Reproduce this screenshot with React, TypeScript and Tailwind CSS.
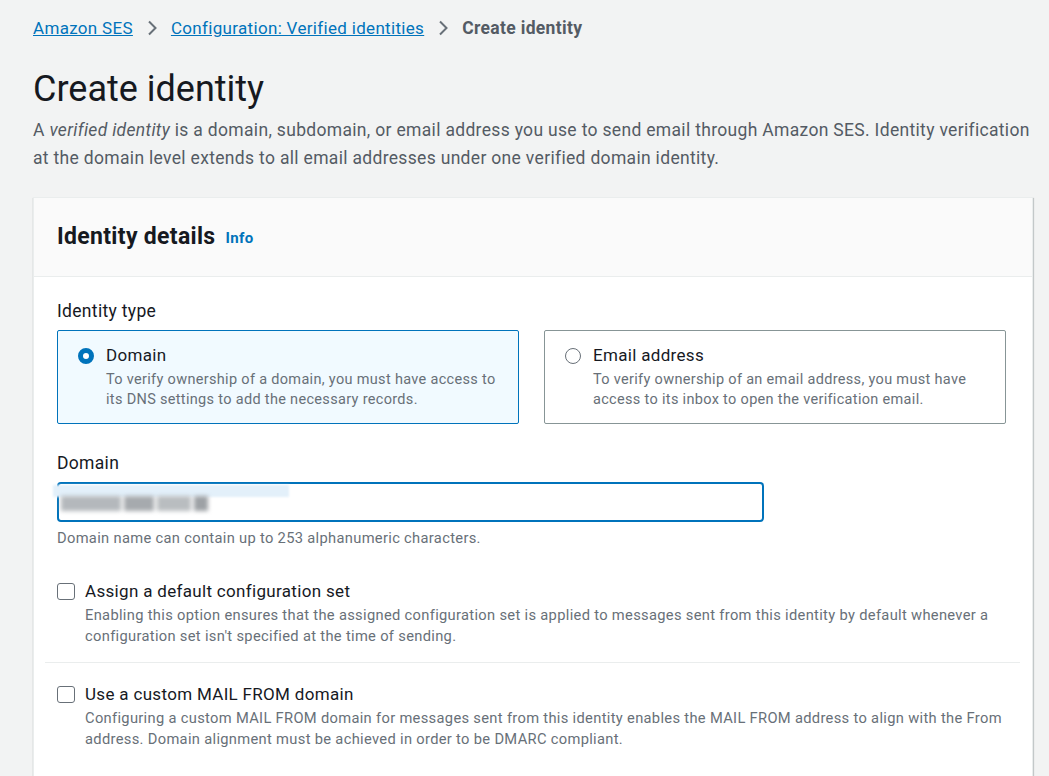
import { useState } from "react";

const font = { fontFamily: "Roboto, 'Liberation Sans', sans-serif" };

const Chevron = () => (
  <svg width="16" height="18" viewBox="0 0 16 18" className="mx-[11px] shrink-0">
    <path d="M5 2.5 11.5 9 5 15.5" fill="none" stroke="#687078" strokeWidth="2" />
  </svg>
);

interface TileProps {
  title: string;
  description: string;
  selected: boolean;
  onSelect: () => void;
}

const RadioTile = ({ title, description, selected, onSelect }: TileProps) => (
  <button
    type="button"
    onClick={onSelect}
    className={
      selected
        ? "flex h-[94px] items-start gap-[13px] rounded-[2px] border border-[#0073bb] bg-[#f1faff] pl-[20px] pr-4 pt-[12px] text-left"
        : "flex h-[94px] items-start gap-[13px] rounded-[2px] border border-[#879596] bg-white pl-[20px] pr-4 pt-[12px] text-left"
    }
  >
    <span
      className={
        selected
          ? "mt-[5px] h-[16px] w-[16px] shrink-0 rounded-full border-[5px] border-[#0073bb] bg-white"
          : "mt-[5px] h-[16px] w-[16px] shrink-0 rounded-full border border-[#687078] bg-white"
      }
    />
    <span className="-ml-px flex flex-col">
      <span className="text-[17px] leading-[24px] text-[#16191f]">{title}</span>
      <span className="mt-[3px] text-[14.5px] leading-[20px] text-[#687078]">{description}</span>
    </span>
  </button>
);

interface CheckProps {
  label: string;
  description: string;
}

const CheckOption = ({ label, description }: CheckProps) => {
  const [checked, setChecked] = useState(false);
  return (
    <label className="flex cursor-pointer items-start gap-[10px]">
      <input
        type="checkbox"
        checked={checked}
        onChange={() => setChecked(!checked)}
        className="mt-[3px] h-[17px] w-[18px] shrink-0 appearance-none rounded-[3px] border border-[#687078] bg-white checked:bg-[#0073bb]"
      />
      <span className="flex flex-col">
        <span className="text-[17px] leading-[22px] text-[#16191f]">{label}</span>
        <span className="mt-[3px] text-[14.7px] leading-[20.5px] text-[#687078]">{description}</span>
      </span>
    </label>
  );
};

export default function App() {
  const [identityType, setIdentityType] = useState<"domain" | "email">("domain");

  return (
    <div className="min-h-screen bg-[#f2f3f3] pb-10 pl-[33px] pt-[16px] tracking-[0.02em]" style={font}>
      <nav className="flex items-center text-[17px] leading-[24px]">
        <a href="#" className="text-[#0073bb] underline">Amazon SES</a>
        <Chevron />
        <a href="#" className="text-[#0073bb] underline">Configuration: Verified identities</a>
        <Chevron />
        <span className="text-[17.5px] font-bold text-[#545b64]">Create identity</span>
      </nav>

      <h1 className="mt-[27px] text-[36px] leading-[44px] tracking-normal text-[#16191f]">Create identity</h1>
      <p className="mt-[5px] w-[1000px] text-[17.5px] leading-[28px] text-[#545b64]">
        A <i>verified identity</i> is a domain, subdomain, or email address you use to send email through Amazon SES. Identity verification at the domain level extends to all email addresses under one verified domain identity.
      </p>

      <section className="mt-[25px] w-[1000px] border border-[#eaeded] bg-white shadow-[0_1px_1px_0_rgba(0,28,36,0.3),1px_1px_1px_0_rgba(0,28,36,0.15)]">
        <header className="flex h-[79px] items-center gap-[10px] border-b border-[#eaeded] bg-[#fafafa] px-[23px] pb-[1px]">
          <h2 className="text-[23px] font-bold leading-[30px] text-[#16191f]">Identity details</h2>
          <a href="#" className="mt-[3px] text-[15px] font-bold text-[#0073bb]">Info</a>
        </header>

        <div className="pb-[28px] pl-[23px] pr-[24px] pt-[23px]">
          <div className="text-[17.5px] leading-[22px] text-[#16191f]">Identity type</div>
          <div className="mt-[8px] grid grid-cols-2 gap-[25px] pr-[2px]">
            <RadioTile
              title="Domain"
              description="To verify ownership of a domain, you must have access to its DNS settings to add the necessary records."
              selected={identityType === "domain"}
              onSelect={() => setIdentityType("domain")}
            />
            <RadioTile
              title="Email address"
              description="To verify ownership of an email address, you must have access to its inbox to open the verification email."
              selected={identityType === "email"}
              onSelect={() => setIdentityType("email")}
            />
          </div>

          <div className="mt-[28px] text-[17.5px] leading-[22px] text-[#16191f]">Domain</div>
          <div className="relative mt-[8px] flex h-[40px] w-[707px] items-center rounded-[4px] border-2 border-[#0073bb] bg-white">
            <div className="absolute -left-[6px] top-[1px] h-[12px] w-[236px] bg-[#e3f0fa] blur-[1px]" />
            <div className="relative ml-[2px] mt-[3px] flex gap-[3px] blur-[2px]">
              <span className="h-[15px] w-[60px] bg-[#b4b8bc]" />
              <span className="h-[15px] w-[30px] bg-[#a6aaae]" />
              <span className="h-[15px] w-[34px] bg-[#b9bdc0]" />
              <span className="h-[15px] w-[14px] bg-[#9da1a5]" />
            </div>
          </div>
          <div className="mt-[6px] text-[14.7px] leading-[20px] text-[#687078]">
            Domain name can contain up to 253 alphanumeric characters.
          </div>

          <div className="mt-[32px]">
            <CheckOption
              label="Assign a default configuration set"
              description="Enabling this option ensures that the assigned configuration set is applied to messages sent from this identity by default whenever a configuration set isn't specified at the time of sending."
            />
          </div>

          <div className="-mx-[12px] mt-[16px] border-t border-[#eaeded]" />

          <div className="mt-[20px]">
            <CheckOption
              label="Use a custom MAIL FROM domain"
              description="Configuring a custom MAIL FROM domain for messages sent from this identity enables the MAIL FROM address to align with the From address. Domain alignment must be achieved in order to be DMARC compliant."
            />
          </div>
        </div>
      </section>
    </div>
  );
}
